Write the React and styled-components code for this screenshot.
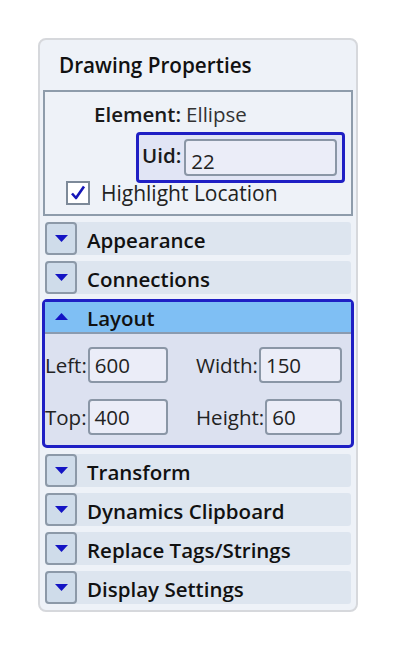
import styled, { createGlobalStyle } from 'styled-components'

const GlobalStyle = createGlobalStyle`
  html, body {
    margin: 0;
    padding: 0;
    background: #ffffff;
  }
  body {
    font-family: "Open Sans", "Noto Sans", sans-serif;
    color: #1a1a1a;
  }
`

const sections = ['Appearance', 'Connections']
const lowerSections = ['Transform', 'Dynamics Clipboard', 'Replace Tags/Strings', 'Display Settings']

function DownArrow() {
  return (
    <svg width="13" height="7" viewBox="0 0 13 7">
      <polygon points="0,0 13,0 6.5,7" fill="#1414c4" />
    </svg>
  )
}

function UpArrow() {
  return (
    <svg width="13" height="7" viewBox="0 0 13 7">
      <polygon points="0,7 13,7 6.5,0" fill="#1414c4" />
    </svg>
  )
}

function Section({ title }) {
  return (
    <Row>
      <ExpandButton><DownArrow /></ExpandButton>
      <RowLabel>{title}</RowLabel>
    </Row>
  )
}

function Field({ label, value, wide }) {
  return (
    <FieldCell $wide={wide}>
      <FieldLabel>{label}</FieldLabel>
      <FieldInput $wide={wide}>{value}</FieldInput>
    </FieldCell>
  )
}

export default function App() {
  return (
    <>
      <GlobalStyle />
      <Panel>
        <Title>Drawing Properties</Title>
        <ElementBox>
          <ElementLine>
            <strong>Element:</strong>
            <span>Ellipse</span>
          </ElementLine>
          <UidBox>
            <UidLabel>Uid:</UidLabel>
            <UidInput>22</UidInput>
          </UidBox>
          <CheckLine>
            <CheckBox>
              <svg width="18" height="18" viewBox="0 0 18 18">
                <path d="M3 9.5 L7 14 L15 2.5" fill="none" stroke="#1616b8" strokeWidth="2.6" strokeLinejoin="round" />
              </svg>
            </CheckBox>
            <span>Highlight Location</span>
          </CheckLine>
        </ElementBox>
        <List>
          {sections.map(s => <Section key={s} title={s} />)}
          <Group>
            <GroupHeader>
              <HeaderArrow><UpArrow /></HeaderArrow>
              <RowLabel>Layout</RowLabel>
            </GroupHeader>
            <FieldGrid>
              <Field label="Left:" value="600" />
              <Field label="Width:" value="150" wide />
              <Field label="Top:" value="400" />
              <Field label="Height:" value="60" wide />
            </FieldGrid>
          </Group>
          {lowerSections.map(s => <Section key={s} title={s} />)}
        </List>
      </Panel>
    </>
  )
}

const Panel = styled.div`
  box-sizing: border-box;
  margin: 38px 0 0 38px;
  width: 320px;
  border: 2px solid #d6d8dc;
  border-radius: 8px;
  background: #eef2f8;
  padding: 0 3px 6px;
`

const Title = styled.div`
  height: 50px;
  line-height: 50px;
  padding-left: 16px;
  font-size: 20.7px;
  font-weight: 600;
  color: #111;
`

const ElementBox = styled.div`
  border: 2px solid #8e9cab;
  display: flex;
  flex-direction: column;
  padding: 9px 0 9px;
  font-size: 20.5px;
`

const ElementLine = styled.div`
  display: flex;
  gap: 5px;
  height: 26px;
  line-height: 26px;
  padding-left: 49px;
  > strong {
    font-weight: 600;
  }
  > span {
    color: #333;
  }
`

const UidBox = styled.div`
  box-sizing: border-box;
  margin: 5px 0 0 91px;
  width: 209px;
  height: 51px;
  border: 3px solid #1f1fc4;
  border-radius: 4px;
  background: #e1e5f5;
  display: flex;
  align-items: center;
  padding: 0 5px 0 3px;
  gap: 3px;
`

const UidLabel = styled.span`
  font-weight: 600;
  margin-top: -6px;
`

const UidInput = styled.div`
  box-sizing: border-box;
  flex: 1;
  height: 37px;
  border: 2px solid #8a96a6;
  border-radius: 4px;
  background: #ebedf8;
  padding: 6px 0 0 5px;
  line-height: 28px;
  color: #222;
`

const CheckLine = styled.div`
  display: flex;
  align-items: center;
  gap: 11px;
  margin: -2px 0 0 21px;
  height: 24px;
  font-size: 21px;
  color: #222;
`

const CheckBox = styled.div`
  box-sizing: border-box;
  width: 24px;
  height: 24px;
  border: 2px solid #7d8a99;
  background: #ffffff;
  display: flex;
  align-items: center;
  justify-content: center;
`

const List = styled.div`
  display: flex;
  flex-direction: column;
  gap: 6px;
  margin-top: 6px;
`

const Row = styled.div`
  display: flex;
  align-items: center;
  height: 33px;
  margin: 0 2px;
  background: #dde5ef;
  border-radius: 3px;
`

const ExpandButton = styled.div`
  box-sizing: border-box;
  width: 32px;
  height: 33px;
  border: 2px solid #8c99a8;
  border-radius: 4px;
  background: #cfdcea;
  display: flex;
  align-items: center;
  justify-content: center;
`

const RowLabel = styled.span`
  margin-left: 10px;
  margin-top: 2px;
  font-size: 20.5px;
  font-weight: 600;
  color: #111;
`

const Group = styled.div`
  margin: -1px -1px 0;
  border: 3px solid #1f1fc4;
  border-radius: 5px;
  background: #dce1f0;
`

const GroupHeader = styled.div`
  display: flex;
  align-items: center;
  height: 30px;
  background: #7fbff4;
  border-bottom: 2px solid #8a9bb0;
`

const HeaderArrow = styled.div`
  width: 32px;
  display: flex;
  justify-content: center;
  margin-top: -2px;
`

const FieldGrid = styled.div`
  display: grid;
  grid-template-columns: 1fr 146px;
  row-gap: 16px;
  padding: 13px 9px 10px 0;
  font-size: 20.5px;
`

const FieldCell = styled.div`
  display: flex;
  align-items: center;
  gap: 1px;
  justify-content: ${p => (p.$wide ? 'flex-end' : 'flex-start')};
`

const FieldLabel = styled.span`
  color: #222;
`

const FieldInput = styled.div`
  box-sizing: border-box;
  width: ${p => (p.$wide ? 'auto' : '80px')};
  flex: ${p => (p.$wide ? 1 : 'none')};
  height: 36px;
  border: 2px solid #8a96a6;
  border-radius: 4px;
  background: #ebedf8;
  padding: 0 0 0 5px;
  line-height: 32px;
  color: #222;
`
